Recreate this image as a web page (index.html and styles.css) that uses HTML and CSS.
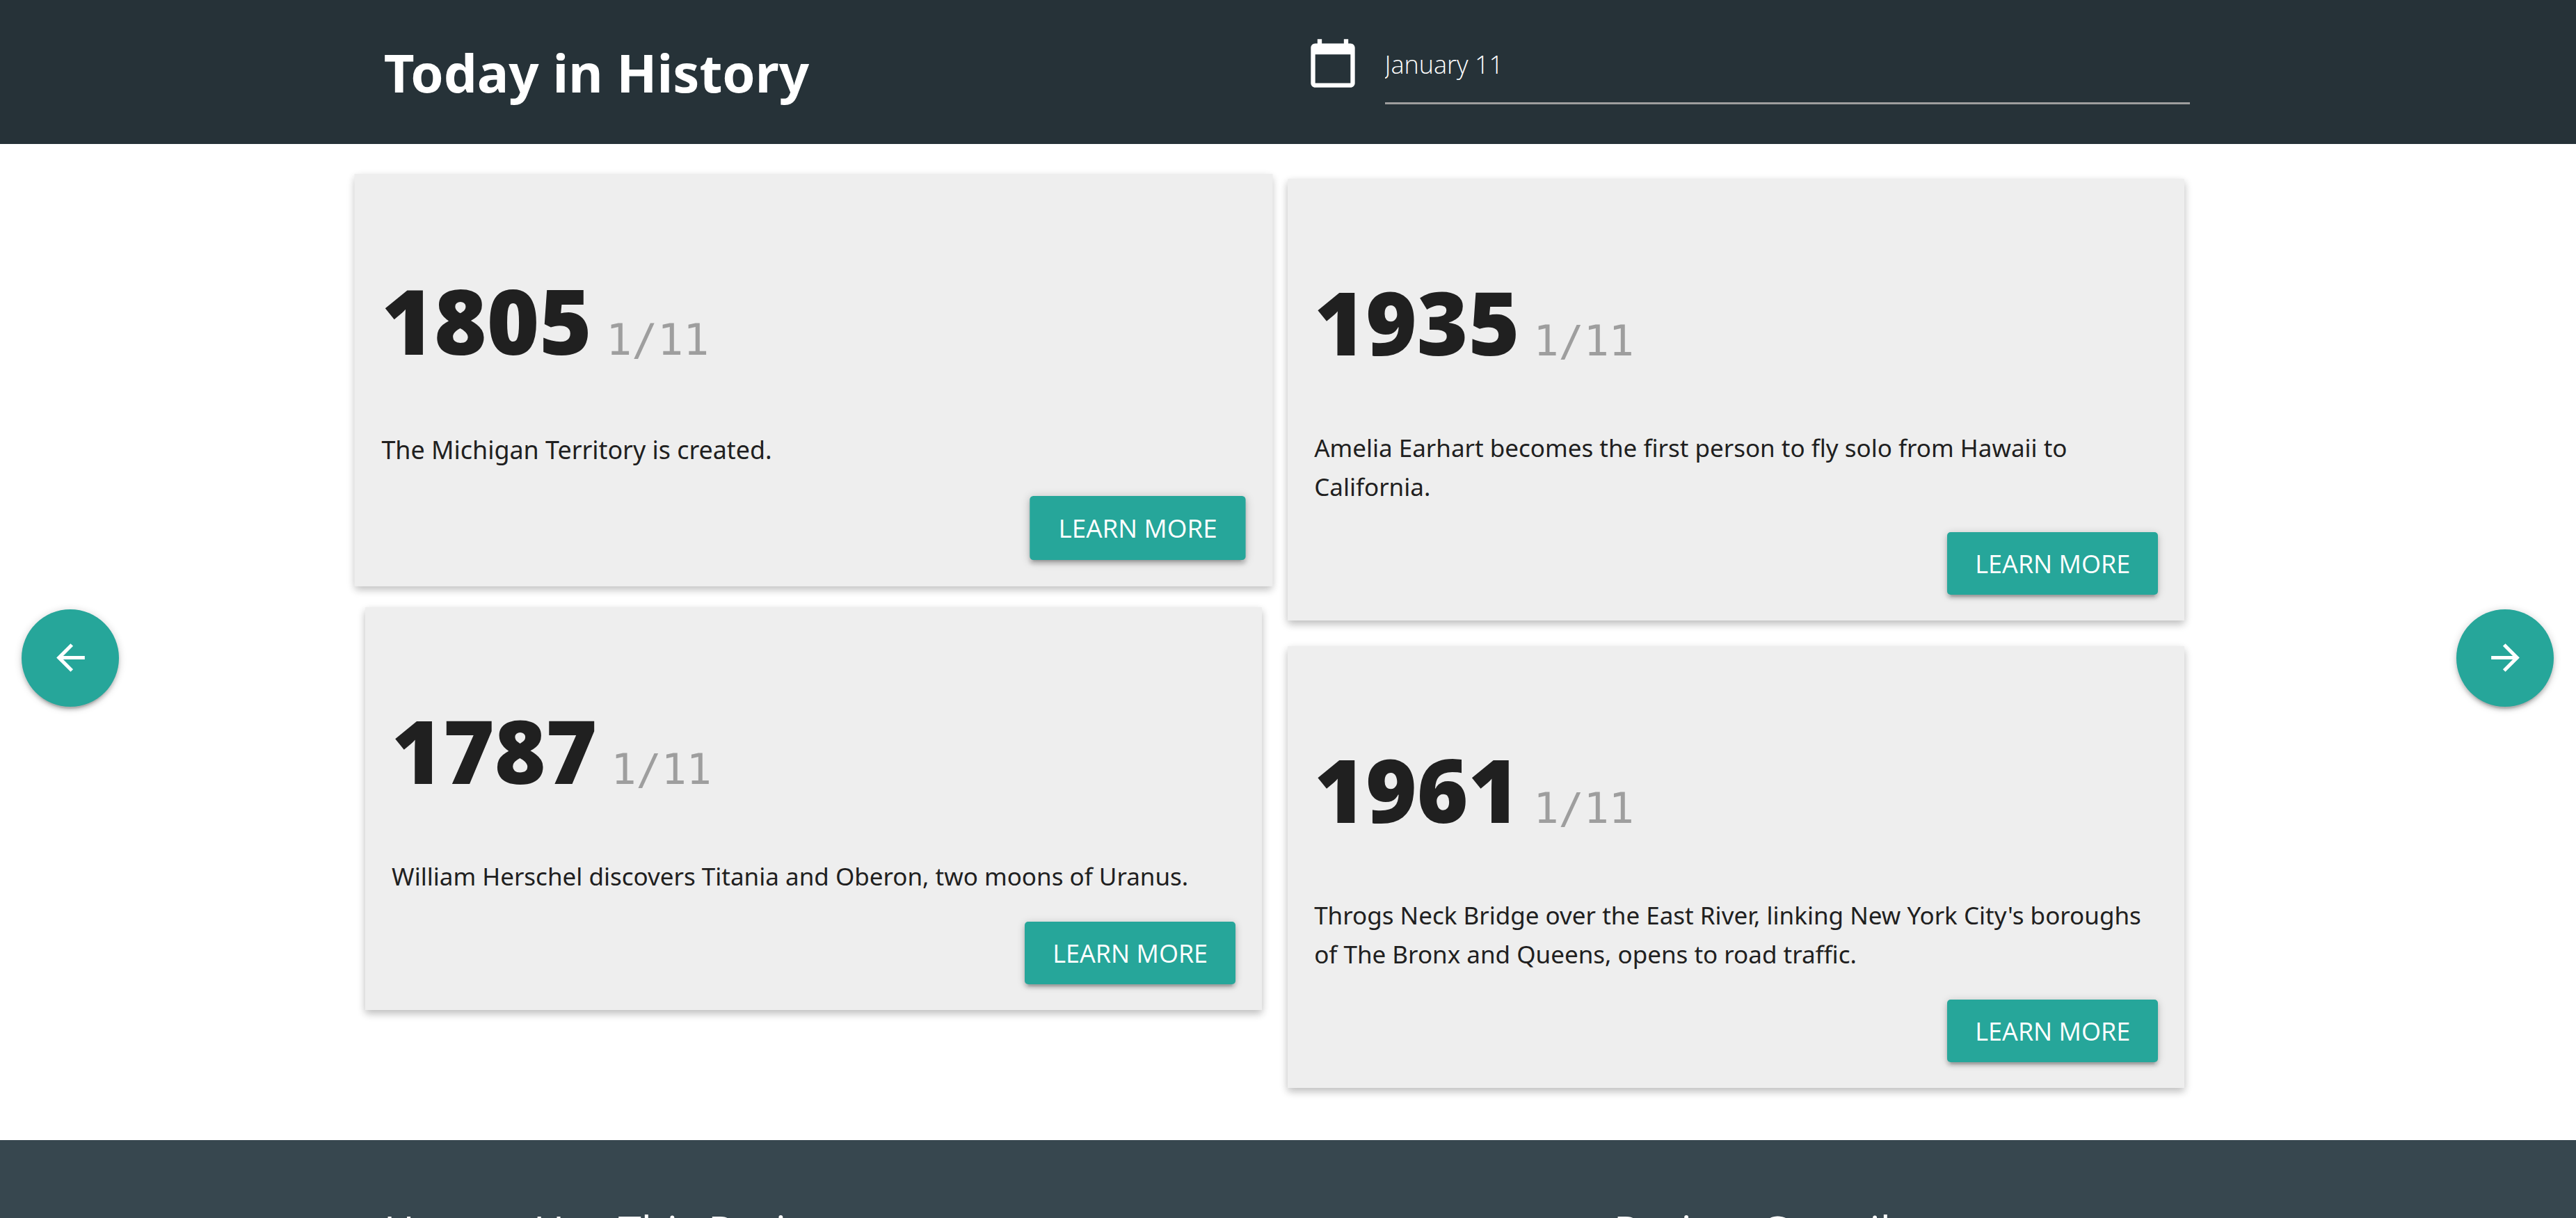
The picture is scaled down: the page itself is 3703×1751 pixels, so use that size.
FILE: index.html
```html
<!DOCTYPE html>
<html lang="en">
<head>
  <meta charset="utf-8">
  <title>Today in History</title>
  <link rel="stylesheet" href="styles.css">
</head>
<body>
  <header class="header">
    <h1 class="title">Today in History</h1>
    <div class="date-field">
      <label class="date-label" for="date" aria-label="Date">
        <svg class="date-icon" viewBox="0 0 24 24" aria-hidden="true"><path d="M20 3h-1V1h-2v2H7V1H5v2H4c-1.1 0-2 .9-2 2v16c0 1.1.9 2 2 2h16c1.1 0 2-.9 2-2V5c0-1.1-.9-2-2-2zm0 18H4V8h16v13z"/></svg>
      </label>
      <input class="date-input" id="date" type="text" value="January 11">
    </div>
  </header>

  <main class="events">
    <div class="column">
      <article class="card card-active">
        <h2 class="card-heading"><span class="year">1805</span><span class="day">1/11</span></h2>
        <p class="card-text">The Michigan Territory is created.</p>
        <button class="button" type="button">LEARN MORE</button>
      </article>
      <article class="card">
        <h2 class="card-heading"><span class="year">1787</span><span class="day">1/11</span></h2>
        <p class="card-text">William Herschel discovers Titania and Oberon, two moons of Uranus.</p>
        <button class="button" type="button">LEARN MORE</button>
      </article>
    </div>
    <div class="column">
      <article class="card">
        <h2 class="card-heading"><span class="year">1935</span><span class="day">1/11</span></h2>
        <p class="card-text">Amelia Earhart becomes the first person to fly solo from Hawaii to California.</p>
        <button class="button" type="button">LEARN MORE</button>
      </article>
      <article class="card">
        <h2 class="card-heading"><span class="year">1961</span><span class="day">1/11</span></h2>
        <p class="card-text">Throgs Neck Bridge over the East River, linking New York City's boroughs of The Bronx and Queens, opens to road traffic.</p>
        <button class="button" type="button">LEARN MORE</button>
      </article>
    </div>
  </main>

  <button class="arrow arrow-prev" type="button" aria-label="Previous day">
    <svg class="arrow-icon" viewBox="0 0 24 24" aria-hidden="true"><path d="M20 11H7.83l5.59-5.59L12 4l-8 8 8 8 1.41-1.41L7.83 13H20v-2z"/></svg>
  </button>
  <button class="arrow arrow-next" type="button" aria-label="Next day">
    <svg class="arrow-icon" viewBox="0 0 24 24" aria-hidden="true"><path d="M12 4l-1.41 1.41L16.17 11H4v2h12.17l-5.58 5.59L12 20l8-8z"/></svg>
  </button>

  <footer class="footer">
    <h2 class="footer-heading">How to Use This Project</h2>
    <h2 class="footer-heading">Project Contributors</h2>
  </footer>
</body>
</html>
```
FILE: styles.css
```css
* {
  box-sizing: border-box;
}

body {
  display: flex;
  flex-direction: column;
  height: 100vh;
  margin: 0;
  overflow: hidden;
  background: #fff;
  color: #202020;
  font-family: "Open Sans", "Noto Sans", sans-serif;
  font-size: 36px;
  line-height: 56px;
}

h1,
h2,
p {
  margin: 0;
}

.header {
  display: grid;
  grid-template-columns: 1fr 1270px;
  flex-shrink: 0;
  height: 207px;
  padding: 0 15% 0 14.9%;
  background: #263238;
  color: #fff;
}

.title {
  padding-top: 48px;
  font-family: "Noto Sans", sans-serif;
  font-size: 76px;
  font-weight: 700;
  line-height: 112px;
}

.date-field {
  display: flex;
  align-items: flex-start;
  gap: 37px;
  padding-top: 38px;
}

.date-label {
  padding-top: 15px;
}

.date-icon {
  display: block;
  width: 76px;
  height: 76px;
  fill: #fff;
}

.date-input {
  flex: 1;
  min-width: 0;
  height: 112px;
  padding: 0;
  border: 0;
  border-bottom: 3px solid #9e9e9e;
  background: none;
  color: #fff;
  font-family: inherit;
  font-size: 36px;
  font-weight: 300;
  outline: none;
}

.events {
  display: flex;
  align-items: flex-start;
  flex-shrink: 0;
  gap: 37px;
  padding: 50px 15.2% 75px 14.18%;
}

.column {
  display: flex;
  flex: 1;
  flex-direction: column;
  gap: 37px;
  min-width: 0;
}

.card {
  display: flex;
  flex-direction: column;
  align-items: flex-start;
  padding: 37px 38px;
  background: #eee;
  box-shadow: 0 5px 12px rgba(0, 0, 0, 0.16), 0 5px 10px rgba(0, 0, 0, 0.12);
}

.card-active {
  transform: scale(1.024);
}

.card-heading {
  display: flex;
  align-items: baseline;
  gap: 20px;
  padding: 94px 0 80px;
  line-height: 148px;
}

.year {
  font-family: "Noto Sans", sans-serif;
  font-size: 126px;
  font-weight: 900;
}

.day {
  color: #9e9e9e;
  font-family: "DejaVu Sans Mono", monospace;
  font-size: 60px;
  font-weight: 400;
  line-height: 60px;
}

.card-text {
  font-family: "Noto Sans", sans-serif;
  font-size: 35px;
}

.button {
  align-self: flex-end;
  height: 90px;
  margin-top: 37px;
  padding: 0 40px;
  border: 0;
  border-radius: 5px;
  background: #26a69a;
  box-shadow: 0 5px 5px rgba(0, 0, 0, 0.14), 0 8px 2px -5px rgba(0, 0, 0, 0.12), 0 2px 12px rgba(0, 0, 0, 0.2);
  color: #fff;
  font-family: inherit;
  font-size: 36px;
}

.arrow {
  position: fixed;
  top: 50%;
  display: grid;
  place-items: center;
  width: 140px;
  height: 140px;
  padding: 0;
  border: 0;
  border-radius: 50%;
  background: #26a69a;
  box-shadow: 0 5px 5px rgba(0, 0, 0, 0.14), 0 8px 2px -5px rgba(0, 0, 0, 0.12), 0 2px 12px rgba(0, 0, 0, 0.2);
}

.arrow-prev {
  left: 31px;
}

.arrow-next {
  right: 32px;
}

.arrow-icon {
  width: 61px;
  height: 61px;
  fill: #fff;
}

.footer {
  display: grid;
  flex: 1;
  grid-template-columns: 1768px 1fr;
  min-height: 0;
  padding: 88px 15% 0 14.9%;
  overflow: hidden;
  background: #37474f;
  color: #fff;
}

.footer-heading {
  font-size: 60px;
  font-weight: 400;
  line-height: 84px;
}
```
